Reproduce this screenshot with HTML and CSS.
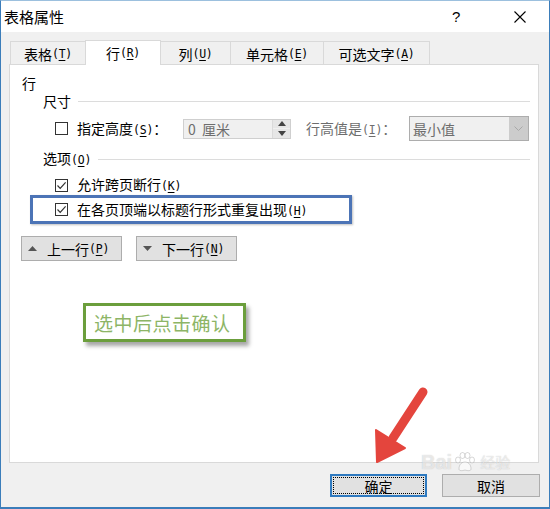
FILE: index.html
```html
<!DOCTYPE html>
<html lang="zh-CN">
<head>
<meta charset="utf-8">
<title>表格属性</title>
<link rel="stylesheet" href="styles.css">
</head>
<body>
<div class="window">
  <div class="titlebar">
    <span class="title">表格属性</span>
    <span class="tb-help">?</span>
    <span class="tb-close"><svg width="12" height="12" viewBox="0 0 12 12"><path d="M0.5 0.5L11.5 11.5M11.5 0.5L0.5 11.5" stroke="#000" stroke-width="1.1" fill="none"/></svg></span>
  </div>
  <div class="tabs">
    <div class="tab t1">表格<span class="mn">(<u>T</u>)</span></div>
    <div class="tab t2 active">行<span class="mn">(<u>R</u>)</span></div>
    <div class="tab t3">列<span class="mn">(<u>U</u>)</span></div>
    <div class="tab t4">单元格<span class="mn">(<u>E</u>)</span></div>
    <div class="tab t5">可选文字<span class="mn">(<u>A</u>)</span></div>
  </div>
  <div class="panel">
    <div class="sec-title">行</div>
    <div class="group-head"><span>尺寸</span><span class="rule"></span></div>
    <div class="size-row">
      <span class="cb"></span>
      <span class="lbl-h">指定高度<span class="mn">(<u>S</u>)</span>：</span>
      <span class="spin">
        <span class="spin-val">0&nbsp; 厘米</span>
        <span class="spin-btns">
          <span class="sb"><svg width="8" height="5" viewBox="0 0 8 5"><path d="M0 5L4 0L8 5Z" fill="#444"/></svg></span>
          <span class="sb"><svg width="8" height="5" viewBox="0 0 8 5"><path d="M0 0L4 5L8 0Z" fill="#444"/></svg></span>
        </span>
      </span>
      <span class="lbl-r">行高值是<span class="mn">(<u>I</u>)</span>：</span>
      <span class="select">
        <span class="sel-val">最小值</span>
        <span class="sel-btn"><svg width="9" height="5" viewBox="0 0 9 5"><path d="M0.5 0.5L4.5 4.5L8.5 0.5" stroke="#a8a8a8" fill="none"/></svg></span>
      </span>
    </div>
    <div class="group-head g2"><span>选项<span class="mn">(<u>O</u>)</span></span><span class="rule"></span></div>
    <div class="check-row">
      <span class="cb checked"><svg width="11" height="11" viewBox="0 0 11 11"><path d="M1.5 5.5L4.2 8.3L9.6 2.4" stroke="#333" stroke-width="1.2" fill="none"/></svg></span>
      <span>允许跨页断行<span class="mn">(<u>K</u>)</span></span>
    </div>
    <div class="highlight">
      <span class="cb checked"><svg width="11" height="11" viewBox="0 0 11 11"><path d="M1.5 5.5L4.2 8.3L9.6 2.4" stroke="#333" stroke-width="1.2" fill="none"/></svg></span>
      <span>在各页顶端以标题行形式重复出现<span class="mn">(<u>H</u>)</span></span>
    </div>
    <div class="nav-row">
      <span class="btn nav"><svg class="tri" width="9" height="5" viewBox="0 0 9 5"><path d="M0 5L4.5 0L9 5Z" fill="#555"/></svg>上一行<span class="mn">(<u>P</u>)</span></span>
      <span class="btn nav"><svg class="tri" width="9" height="5" viewBox="0 0 9 5"><path d="M0 0L4.5 5L9 0Z" fill="#555"/></svg>下一行<span class="mn">(<u>N</u>)</span></span>
    </div>
  </div>
  <div class="footer">
    <span class="btn ok"><span class="focus">确定</span></span>
    <span class="btn cancel">取消</span>
  </div>
  <div class="note">选中后点击确认</div>
  <svg class="arrow" width="550" height="509" viewBox="0 0 550 509">
    <line x1="423" y1="392" x2="393" y2="438" stroke="#e4453d" stroke-width="9" stroke-linecap="round"/>
    <path d="M377 462L376 430L405 448Z" fill="#e4453d" stroke="#e4453d" stroke-width="2" stroke-linejoin="round"/>
  </svg>
  <div class="watermark">
    <span class="wm-big">Bai</span>
    <svg class="wm-paw" width="22" height="20" viewBox="0 0 22 20"><g fill="rgba(255,255,255,0.6)" stroke="rgba(140,140,140,0.35)" stroke-width="1"><ellipse cx="4" cy="8" rx="2.5" ry="3"/><ellipse cx="8.5" cy="3.5" rx="2.5" ry="3"/><ellipse cx="13.5" cy="3.5" rx="2.5" ry="3"/><ellipse cx="18" cy="8" rx="2.5" ry="3"/><path d="M5 17C5 12 8 10 11 10C14 10 17 12 17 17C17 19 14 19 11 18C8 19 5 19 5 17Z"/></g></svg>
    <span class="wm-cn">经验</span>
  </div>
</div>
</body>
</html>
```
FILE: styles.css
```css
html, body {
  margin: 0;
  padding: 0;
}
body {
  width: 550px;
  height: 509px;
  overflow: hidden;
  font-family: "Noto Sans CJK SC", "Liberation Sans", sans-serif;
  font-size: 14px;
  color: #000;
}
.window {
  position: relative;
  box-sizing: border-box;
  width: 550px;
  height: 509px;
  border-left: 1px solid #3b7dba;
  border-right: 1px solid #3b7dba;
  border-top: 1px solid #9cc0de;
  border-bottom: 2px solid #3b7dba;
  background: #f0f0f0;
  display: flex;
  flex-direction: column;
}
.mn {
  font-family: "DejaVu Sans Mono", "Liberation Mono", monospace;
  font-size: 11.5px;
  letter-spacing: -0.2px;
}
.mn u {
  text-decoration-thickness: 1px;
  text-underline-offset: 2px;
}
.titlebar {
  height: 31px;
  background: #fff;
  display: flex;
  align-items: center;
  line-height: 18px;
}
.title {
  padding-left: 3px;
  font-size: 15px;
  flex: 1;
}
.tb-help {
  width: 14px;
  font-family: "Liberation Sans", sans-serif;
  font-size: 15px;
  margin-right: 48px;
}
.tb-close {
  width: 12px;
  height: 12px;
  display: flex;
  margin-right: 23px;
}
.tabs {
  margin-top: 8px;
  padding-left: 9px;
  height: 24px;
  display: flex;
  align-items: flex-end;
  position: relative;
  z-index: 1;
}
.tab {
  box-sizing: border-box;
  height: 23px;
  border: 1px solid #d9d9d9;
  border-bottom: none;
  background: #f0f0f0;
  display: flex;
  align-items: center;
  justify-content: center;
  line-height: 18px;
  padding-top: 1px;
  margin-left: -1px;
}
.tab.t1 { width: 76px; margin-left: 0; }
.tab.t2 { width: 76px; }
.tab.t3 { width: 71px; }
.tab.t4 { width: 94px; }
.tab.t5 { width: 107px; }
.tab.active {
  height: 25px;
  background: #fff;
  margin-bottom: -1px;
  padding-top: 0;
}
.panel {
  box-sizing: border-box;
  margin: 0 10px 0 8px;
  height: 399px;
  border: 1px solid #d9d9d9;
  background: #fff;
  line-height: 18px;
}
.sec-title {
  margin-top: 9px;
  height: 18px;
  padding-left: 12px;
}
.group-head {
  height: 18px;
  padding-left: 33px;
  padding-right: 8px;
  display: flex;
  align-items: center;
}
.group-head .rule {
  flex: 1;
  height: 1px;
  background: #dcdcdc;
  margin-left: 7px;
}
.group-head.g2 {
  margin-top: 9px;
}
.size-row {
  margin-top: 6px;
  height: 25px;
  padding-left: 45px;
  display: flex;
  align-items: center;
}
.cb {
  box-sizing: border-box;
  width: 13px;
  height: 13px;
  border: 1px solid #333;
  background: #fff;
  margin-right: 9px;
  display: flex;
  align-items: center;
  justify-content: center;
  flex: none;
}
.lbl-h {
  width: 106px;
}
.spin {
  box-sizing: border-box;
  width: 108px;
  height: 20px;
  border: 1px solid #cfcfcf;
  background: #f0f0f0;
  display: flex;
  align-items: center;
  color: #6d6d6d;
}
.spin-val {
  flex: 1;
  padding-left: 4px;
  font-size: 14px;
}
.spin-btns {
  width: 17px;
  height: 18px;
  display: flex;
  flex-direction: column;
  border-left: 1px solid #dadada;
}
.sb {
  flex: 1;
  display: flex;
  align-items: center;
  justify-content: center;
  background: #e6e6e6;
}
.sb + .sb {
  border-top: 1px solid #f0f0f0;
}
.lbl-r {
  margin-left: 15px;
  width: 103px;
  color: #6d6d6d;
}
.select {
  box-sizing: border-box;
  width: 120px;
  height: 25px;
  border: 1px solid #adadad;
  background: #f0f0f0;
  display: flex;
  align-items: center;
  color: #6d6d6d;
}
.sel-val {
  flex: 1;
  padding-left: 3px;
}
.sel-btn {
  width: 19px;
  height: 23px;
  background: #cccccc;
  display: flex;
  align-items: center;
  justify-content: center;
}
.check-row {
  margin-top: 9px;
  height: 16px;
  padding-left: 45px;
  display: flex;
  align-items: center;
}
.highlight {
  box-sizing: border-box;
  margin-top: 2px;
  margin-left: 20px;
  width: 322px;
  height: 29px;
  border: 3px solid #4c74b6;
  box-shadow: 1px 1px 2px rgba(0, 0, 0, 0.25);
  padding-left: 22px;
  display: flex;
  align-items: center;
}
.nav-row {
  margin-top: 12px;
  padding-left: 11px;
  display: flex;
  gap: 14px;
}
.btn {
  box-sizing: border-box;
  height: 25px;
  border: 1px solid #adadad;
  background: #e1e1e1;
  display: flex;
  align-items: center;
  line-height: 18px;
}
.btn.nav {
  width: 101px;
  padding-left: 6px;
}
.tri {
  margin-right: 10px;
}
.footer {
  margin-top: 11px;
  padding-right: 9px;
  display: flex;
  justify-content: flex-end;
  gap: 15px;
}
.btn.ok {
  width: 97px;
  height: 23px;
  border: 2px solid #2f7ac0;
  padding: 1px;
}
.focus {
  flex: 1;
  align-self: stretch;
  border: 1px dotted #000;
  display: flex;
  align-items: center;
  justify-content: center;
}
.btn.cancel {
  width: 98px;
  height: 23px;
  justify-content: center;
}
.note {
  position: absolute;
  left: 82px;
  top: 302px;
  box-sizing: border-box;
  width: 163px;
  height: 39px;
  border: 3px solid #6b9e3c;
  background: #fff;
  box-shadow: 3px 4px 4px rgba(0, 0, 0, 0.35);
  color: #8db566;
  font-size: 19px;
  line-height: 33px;
  padding-left: 8px;
  letter-spacing: 0.5px;
  z-index: 2;
}
.arrow {
  position: absolute;
  left: -1px;
  top: -1px;
  z-index: 3;
  pointer-events: none;
}
.watermark {
  position: absolute;
  left: 420px;
  top: 451px;
  width: 105px;
  height: 20px;
  display: flex;
  align-items: center;
  gap: 2px;
  z-index: 4;
  color: rgba(255, 255, 255, 0.6);
  text-shadow: 0 0 1px rgba(110, 110, 110, 0.4);
  pointer-events: none;
}
.wm-big {
  font-family: "Liberation Sans", sans-serif;
  font-weight: bold;
  font-size: 20px;
  line-height: 20px;
}
.wm-cn {
  font-size: 15px;
  line-height: 18px;
  margin-left: 2px;
}
```
